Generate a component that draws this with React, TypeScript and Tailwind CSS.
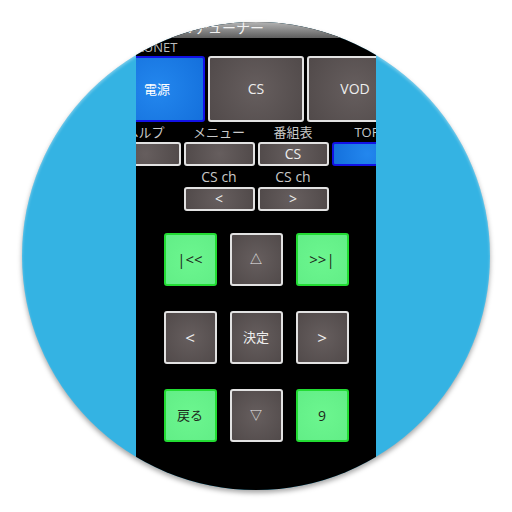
import React from "react";

const font = { fontFamily: '"Open Sans", "Noto Sans CJK JP", "Liberation Sans", sans-serif' };

type Kind = "gray" | "blue" | "green";

const kindClass: Record<Kind, string> = {
  gray: "border-[#e2e2e2] bg-[radial-gradient(circle,#665e5e_0%,#514a4a_100%)] text-[#eeeeee]",
  blue: "border-[#1212e6] bg-[radial-gradient(circle,#2387ee_0%,#1470dc_100%)] text-white",
  green: "border-[#22dc33] bg-[radial-gradient(circle,#6cf68f_0%,#62ee87_100%)] text-[#1c2a1c]",
};

function Key({ kind = "gray", className = "", children }: { kind?: Kind; className?: string; children?: React.ReactNode }) {
  return (
    <div className={`flex shrink-0 items-center justify-center rounded-[3px] border-2 leading-none ${kindClass[kind]} ${className}`}>
      {children}
    </div>
  );
}

function Label({ children, className = "" }: { children?: React.ReactNode; className?: string }) {
  return (
    <div className={`flex w-[71px] shrink-0 justify-center whitespace-nowrap leading-none text-[#c9c9c9] ${className}`}>
      {children}
    </div>
  );
}

export default function App() {
  return (
    <div className="flex h-[512px] w-[512px] items-center justify-center bg-white" style={font}>
      <div className="flex h-[468px] w-[468px] justify-center overflow-hidden rounded-full bg-[#34b3e3] shadow-[0_3px_5px_rgba(0,0,0,0.35),inset_0_2px_3px_rgba(255,255,255,0.35)]">
        {/* phone screen */}
        <div className="flex h-full w-[240px] shrink-0 flex-col items-center overflow-hidden bg-black">
          {/* title bar gloss */}
          <div className="flex h-[16px] w-full shrink-0 overflow-hidden bg-[linear-gradient(#b4b4b4,#5e5e5e)]">
            <div className="mt-[-1px] w-[122px] shrink-0 whitespace-nowrap text-right text-[14px] leading-[14px] text-[#f2f2f2]">
              ひかりTVチューナー
            </div>
          </div>
          <div className="flex h-[18px] w-full shrink-0 items-center pl-[1px] text-[13px] leading-none text-[#bdbdbd]">
            LUNET
          </div>

          <div className="flex w-[294px] shrink-0 flex-col items-center">
            {/* big top row */}
            <div className="flex gap-[3px]">
              <Key kind="blue" className="h-[66px] w-[96px] text-[13px]">電源</Key>
              <Key className="h-[66px] w-[96px] text-[14px]">CS</Key>
              <Key className="h-[66px] w-[96px] text-[14px]">VOD</Key>
            </div>

            {/* labels */}
            <div className="flex h-[20px] items-center gap-[3px] text-[13px]">
              <Label>ヘルプ</Label>
              <Label>メニュー</Label>
              <Label>番組表</Label>
              <Label>TOP</Label>
            </div>

            <div className="flex gap-[3px]">
              <Key className="h-[24px] w-[71px]" />
              <Key className="h-[24px] w-[71px]" />
              <Key className="h-[24px] w-[71px] text-[14px]">CS</Key>
              <Key kind="blue" className="h-[24px] w-[71px]" />
            </div>

            <div className="flex h-[21px] items-center gap-[3px] pt-[1px] text-[14px]">
              <Label>CS ch</Label>
              <Label>CS ch</Label>
            </div>

            <div className="flex gap-[3px]">
              <Key className="h-[24px] w-[71px] text-[14px]">&lt;</Key>
              <Key className="h-[24px] w-[71px] text-[14px]">&gt;</Key>
            </div>

            {/* cursor pad */}
            <div className="mt-[22px] flex flex-col gap-[25px]">
              <div className="flex gap-[13px]">
                <Key kind="green" className="h-[53px] w-[53px] text-[15px]">|&lt;&lt;</Key>
                <Key className="h-[53px] w-[53px] text-[12px] text-[#bdbdbd]">△</Key>
                <Key kind="green" className="h-[53px] w-[53px] text-[15px]">&gt;&gt;|</Key>
              </div>
              <div className="flex gap-[13px]">
                <Key className="h-[53px] w-[53px] text-[17px]">&lt;</Key>
                <Key className="h-[53px] w-[53px] text-[13px]">決定</Key>
                <Key className="h-[53px] w-[53px] text-[17px]">&gt;</Key>
              </div>
              <div className="flex gap-[13px]">
                <Key kind="green" className="h-[53px] w-[53px] text-[13px]">戻る</Key>
                <Key className="h-[53px] w-[53px] text-[12px] text-[#bdbdbd]">▽</Key>
                <Key kind="green" className="h-[53px] w-[53px] text-[14px]">9</Key>
              </div>
            </div>
          </div>
        </div>
      </div>
    </div>
  );
}
